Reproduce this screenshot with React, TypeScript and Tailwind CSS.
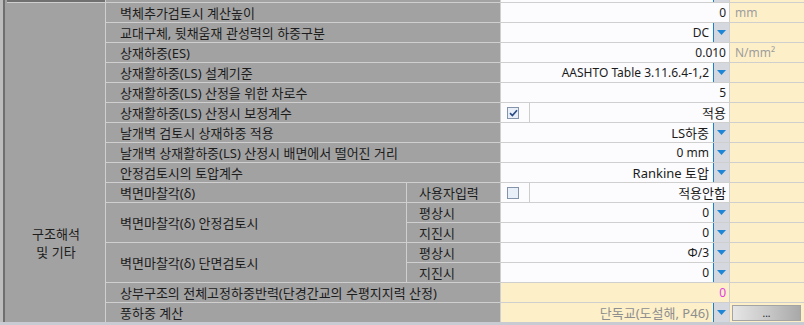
import React from "react";

type Row = {
  label: string;
  value: string;
  drop?: boolean;
  check?: boolean | "off";
  unit?: string;
  yellow?: boolean;
  valueTone?: string;
  button?: boolean;
};

const rows: Row[] = [
  { label: "벽체추가검토시 계산높이", value: "0", unit: "mm" },
  { label: "교대구체, 뒷채움재 관성력의 하중구분", value: "DC", drop: true },
  { label: "상재하중(ES)", value: "0.010", unit: "N/mm²" },
  { label: "상재활하중(LS) 설계기준", value: "AASHTO Table 3.11.6.4-1,2", drop: true },
  { label: "상재활하중(LS) 산정을 위한 차로수", value: "5" },
  { label: "상재활하중(LS) 산정시 보정계수", value: "적용", check: true },
  { label: "날개벽 검토시 상재하중 적용", value: "LS하중", drop: true },
  { label: "날개벽 상재활하중(LS) 산정시 배면에서 떨어진 거리", value: "0 mm", drop: true },
  { label: "안정검토시의 토압계수", value: "Rankine 토압", drop: true },
];

const hangul = /[\uac00-\ud7a3]/;

function Dropdown() {
  return (
    <div className="flex h-full w-[16px] shrink-0 items-center justify-center border-l border-[#1b7fcf] bg-[#d5d8de]">
      <svg width="9" height="5" viewBox="0 0 9 5">
        <path d="M0 0h9L4.5 5z" fill="#1f86d6" />
      </svg>
    </div>
  );
}

function Checkbox({ on }: { on: boolean }) {
  return (
    <div className="flex h-[12px] w-[12px] items-center justify-center border border-[#8393aa] bg-[#e8eff9]">
      {on ? (
        <svg width="9" height="8" viewBox="0 0 9 8">
          <path d="M1 4.2 3.4 6.6 8 1.2" fill="none" stroke="#2b4b86" strokeWidth="1.7" />
        </svg>
      ) : null}
    </div>
  );
}

function ValueCell({ row }: { row: Row }) {
  const bg = row.yellow ? "bg-[#fdf0c9]" : "bg-[#fcfcfe]";
  const tone = row.valueTone ?? "text-[#1b1b1b]";
  const size = hangul.test(row.value) ? "text-[13px]" : "text-[12px]";
  if (row.check !== undefined) {
    return (
      <div className="flex gap-px bg-[#cdcdcd]">
        <div className={`flex w-[28px] items-center pl-[6px] ${bg}`}>
          <Checkbox on={row.check === true} />
        </div>
        <div className={`flex flex-1 items-center justify-end pr-[3px] ${bg} ${tone} ${size}`}>{row.value}</div>
      </div>
    );
  }
  return (
    <div className={`flex items-center justify-end ${bg} ${tone} ${size} ${row.drop ? "" : "pr-[3px]"}`}>
      <span className={row.drop ? "pr-[4px]" : ""}>{row.value}</span>
      {row.drop ? <Dropdown /> : null}
    </div>
  );
}

function UnitCell({ row }: { row?: Row }) {
  return (
    <div className="flex items-center bg-[#fdf0c9] pl-[5px] text-[12px] text-[#9d9d9d]">
      {row?.button ? (
        <div className="ml-[-3px] mr-[3px] flex h-[16px] flex-1 items-center justify-center border border-[#a4a4a4] bg-gradient-to-r from-[#e6e6e6] via-[#c9c9c9] to-[#a9a9a9] text-[10px] leading-none text-[#222]">
          ...
        </div>
      ) : (
        row?.unit
      )}
    </div>
  );
}

export default function App() {
  return (
    <div
      className="flex h-[325px] w-[804px] flex-col overflow-hidden bg-[#c8cbd1] text-[13px] leading-[16px]"
      style={{ fontFamily: '"Noto Sans", "Noto Sans CJK KR", sans-serif' }}
    >
      <div className="flex h-[322px]">
        <div className="flex w-[7px] shrink-0">
          <div className="w-[3px] bg-[#bdbdbd]" />
          <div className="w-[2px] bg-[#6f6f6f]" />
          <div className="w-[2px] bg-[#a2a2a2]" />
        </div>
        <div className="grid flex-1 grid-cols-[98px_300px_93px_228px_1fr] grid-rows-[2px_repeat(16,19px)] gap-px bg-[#cfcfcf] text-[#1c1c1c]">
          {/* bottom edge of the row scrolled above */}
          <div className="bg-[#707070]" />
          <div className="col-span-2 bg-[#a2a2a2]" />
          <div className="flex justify-end bg-[#fcfcfe]">
            <div className="w-[16px] border-l border-[#1b7fcf] bg-[#d5d8de]" />
          </div>
          <div className="bg-[#fdf0c9]" />

          <div className="row-span-16 flex flex-col items-center justify-end bg-[#a2a2a2] pb-[61px] text-center leading-[18px]">
            <div>구조해석</div>
            <div>및 기타</div>
          </div>

          {rows.map((row) => (
            <React.Fragment key={row.label}>
              <div className="col-span-2 flex items-center bg-[#a2a2a2] pl-[14px]">{row.label}</div>
              <ValueCell row={row} />
              <UnitCell row={row} />
            </React.Fragment>
          ))}

          <div className="flex items-center bg-[#a2a2a2] pl-[14px]">벽면마찰각(δ)</div>
          <div className="flex items-center bg-[#a2a2a2] pl-[12px]">사용자입력</div>
          <ValueCell row={{ label: "", value: "적용안함", check: "off" }} />
          <UnitCell />

          <div className="row-span-2 flex items-center bg-[#a2a2a2] pl-[14px]">벽면마찰각(δ) 안정검토시</div>
          <div className="flex items-center bg-[#a2a2a2] pl-[12px]">평상시</div>
          <ValueCell row={{ label: "", value: "0", drop: true }} />
          <UnitCell />
          <div className="flex items-center bg-[#a2a2a2] pl-[12px]">지진시</div>
          <ValueCell row={{ label: "", value: "0", drop: true }} />
          <UnitCell />

          <div className="row-span-2 flex items-center bg-[#a2a2a2] pl-[14px]">벽면마찰각(δ) 단면검토시</div>
          <div className="flex items-center bg-[#a2a2a2] pl-[12px]">평상시</div>
          <ValueCell row={{ label: "", value: "Φ/3", drop: true }} />
          <UnitCell />
          <div className="flex items-center bg-[#a2a2a2] pl-[12px]">지진시</div>
          <ValueCell row={{ label: "", value: "0", drop: true }} />
          <UnitCell />

          <div className="col-span-2 flex items-center bg-[#a2a2a2] pl-[14px]">상부구조의 전체고정하중반력(단경간교의 수평지지력 산정)</div>
          <ValueCell row={{ label: "", value: "0", yellow: true, valueTone: "text-[#e23be0]" }} />
          <UnitCell />

          <div className="col-span-2 flex items-center bg-[#a2a2a2] pl-[14px]">풍하중 계산</div>
          <ValueCell row={{ label: "", value: "단독교(도설해, P46)", drop: true, yellow: true, valueTone: "text-[#8e8e8e]" }} />
          <UnitCell row={{ label: "", value: "", button: true }} />
        </div>
      </div>
    </div>
  );
}
